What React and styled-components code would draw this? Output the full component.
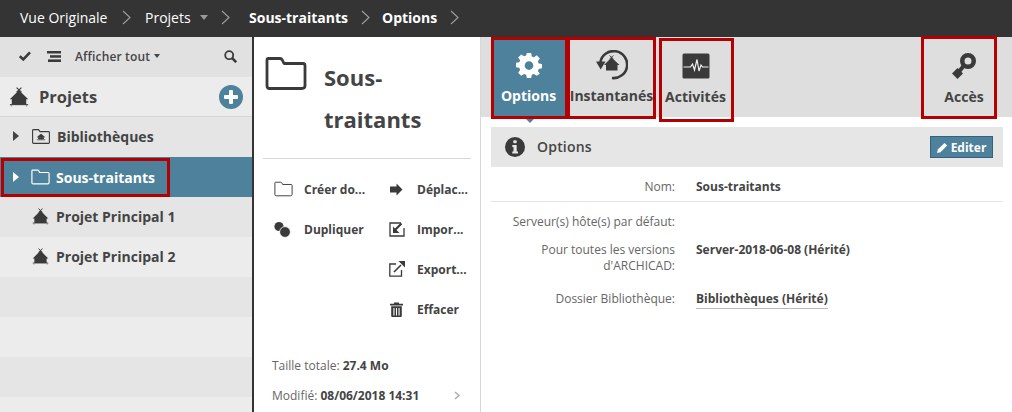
import React from "react";
import styled, { createGlobalStyle } from "styled-components";

const Global = createGlobalStyle`
  html, body { margin: 0; padding: 0; background: #fff; }
  body { font-family: "Open Sans", "Liberation Sans", sans-serif; color: #3c3c3c; }
  * { box-sizing: border-box; }
`;

const Page = styled.div`
  width: 1012px; height: 412px; overflow: hidden;
  display: flex; flex-direction: column; background: #fff;
`;
const TopBar = styled.header`
  height: 37px; flex: none; background: #343434; color: #fff;
  display: flex; align-items: center; padding: 0 0 2px 20px; font-size: 14px;
`;
const Crumb = styled.span`
  font-weight: ${p => (p.$bold ? 700 : 400)}; white-space: nowrap;
  width: ${p => p.$w}px; flex: none;
`;
const Chevron = styled.svg`
  width: 9px; height: 15px; flex: none;
  margin: 0 ${p => p.$r}px 0 ${p => p.$l}px;
`;
const Caret = styled.span`
  flex: none; width: 0; height: 0; margin-left: ${p => p.$l || 0}px;
  border-left: ${p => p.$s || 4.5}px solid transparent; border-right: ${p => p.$s || 4.5}px solid transparent;
  border-top: ${p => (p.$s ? 4 : 5)}px solid ${p => p.$c};
`;
const Body = styled.div`display: flex; flex: 1; min-height: 0;`;

const Sidebar = styled.aside`
  width: 254px; flex: none; border-right: 2px solid #343434; display: flex; flex-direction: column;
`;
const SideTools = styled.div`
  height: 40px; flex: none; background: #e1e1e1; display: flex; align-items: center;
  padding: 0 15px 2px 19px; font-size: 12px; font-weight: 600; color: #444;
`;
const ToolGap = styled.span`width: 16px; flex: none;`;
const ToolSpacer = styled.span`flex: 1;`;
const ToolLabel = styled.span`margin-left: 14px; letter-spacing: 0.15px;`;
const SideHead = styled.div`
  height: 40px; flex: none; background: #ececec; border-bottom: 1px solid #d6d6d6;
  display: flex; align-items: center; padding: 0 9px 0 9px; justify-content: space-between;
`;
const SideTitle = styled.div`
  display: flex; align-items: center; gap: 10px;
  font-size: 16.5px; font-weight: 700; color: #444;
`;
const PlusBtn = styled.span`
  width: 24px; height: 24px; border-radius: 50%; background: #4e819c; position: relative; display: block;
  &::before { content: ""; position: absolute; left: 5px; top: 10px; width: 14px; height: 4px; background: #fff; border-radius: 1px; }
  &::after { content: ""; position: absolute; left: 10px; top: 5px; width: 4px; height: 14px; background: #fff; border-radius: 1px; }
`;
const TreeRow = styled.div`
  height: 40px; flex: none; display: flex; align-items: center;
  background: ${p => (p.$active ? "#4e819c" : p.$alt ? "#ececec" : "#e5e5e5")};
  color: ${p => (p.$active ? "#fff" : "#444")};
  font-size: 14px; font-weight: 700;
  padding-bottom: ${p => (p.$flag ? 0 : 2)}px;
  padding-left: ${p => (p.$flag ? 1 : p.$leaf ? 32 : 13)}px;
`;
const Flagged = styled.div`
  display: flex; align-items: center; width: 169px; height: 39px; align-self: flex-end;
  border: 3px solid #b40000; padding: 0 0 1px 9px;
`;
const Arrow = styled.span`
  flex: none; width: 0; height: 0; margin-right: ${p => p.$r}px;
  border-top: 5px solid transparent; border-bottom: 5px solid transparent;
  border-left: 6px solid currentColor;
`;
const RowIcon = styled.span`display: flex; flex: none; margin-right: ${p => p.$r}px;`;

const Middle = styled.section`
  width: 227px; flex: none; border-right: 1px solid #d8d8d8; padding: 0 9px;
  display: flex; flex-direction: column;
`;
const TitleBlock = styled.div`
  height: 122px; flex: none; border-bottom: 1px solid #d8d8d8;
  display: flex; align-items: flex-start; padding: 19px 0 0 2px;
`;
const TitleText = styled.h1`
  margin: 0 0 0 17px; font-size: 22px; font-weight: 700; color: #444; line-height: 42px; width: 120px;
`;
const Actions = styled.div`
  display: grid; grid-template-columns: 116px 92px; grid-auto-rows: 40px; padding-top: 10px; flex: none;
`;
const Action = styled.div`
  display: flex; align-items: center; font-size: 12px; font-weight: 700; color: #444; padding-left: ${p => (p.$left ? 11 : 10)}px;
  white-space: nowrap;
`;
const ActIcon = styled.span`
  width: ${p => p.$w}px; flex: none; display: flex; align-items: center; padding-left: ${p => p.$p || 0}px;
`;
const Meta = styled.div`
  margin-top: auto; padding: 0 0 2px 9px; font-size: 12px; color: #666;
`;
const MetaLine = styled.div`
  height: 30px; display: flex; align-items: center; white-space: pre;
  b { font-weight: 700; color: #444; }
`;
const MetaChevron = styled.svg`width: 6px; height: 9px; margin-left: 35px; margin-top: 1px;`;

const Main = styled.main`flex: 1; display: flex; flex-direction: column; min-width: 0;`;
const TabBar = styled.nav`
  height: 80px; flex: none; background: #dedede; display: flex; align-items: flex-start; padding-left: 10px;
`;
const Tab = styled.div`
  width: ${p => p.$w}px; height: ${p => p.$h || 82}px; flex: none; border: 3px solid #b40000; position: relative;
  margin-left: ${p => p.$ml || 0}px; margin-top: ${p => p.$mt || 0}px;
  padding-top: ${p => p.$pt || 0}px; padding-left: ${p => p.$pl || 0}px; padding-right: ${p => p.$pr || 0}px;
  display: flex; flex-direction: column; align-items: center;
  font-size: 14px; font-weight: 700; white-space: nowrap;
  background: ${p => (p.$active ? "#4e819c" : "transparent")};
  color: ${p => (p.$active ? "#fff" : "#444")};
`;
const TabIconWrap = styled.span`
  height: 35px; margin-top: 7px; margin-bottom: 4px; display: flex; align-items: center; justify-content: center;
`;
const Pointer = styled.span`
  position: absolute; left: 32px; bottom: -7px; width: 0; height: 0;
  border-left: 4px solid transparent; border-right: 4px solid transparent; border-top: 4px solid #4e819c;
`;
const Panel = styled.div`padding: 10px 9px 0 10px;`;
const PanelHead = styled.div`
  height: 40px; background: #e6e6e6; display: flex; align-items: center; padding: 0 10px 0 14px;
`;
const PanelTitle = styled.span`margin: 0 0 2px 12px; font-size: 14px; font-weight: 600; color: #444; flex: 1; letter-spacing: 0.2px;`;
const EditBtn = styled.span`
  width: 63px; height: 22px; background: #4e819c; border: 1px solid #37607a; color: #fff;
  font-size: 12px; font-weight: 700; display: flex; align-items: center; justify-content: center; gap: 3px;
`;
const FieldRow = styled.div`
  display: grid; grid-template-columns: 184px 1fr; column-gap: 21px; font-size: 12px; line-height: 16px;
  padding: ${p => p.$pad || "0"};
  border-bottom: ${p => (p.$line ? "1px solid #e4e4e4" : "none")};
`;
const FieldLabel = styled.div`text-align: right; color: #666;`;
const FieldValue = styled.div`font-weight: 700; color: #444; font-size: 12px;`;
const Linked = styled.span`border-bottom: 1px solid #bbb; padding-bottom: 1px;`;

const Hut = ({ s = 16 }) => (
  <svg width={s} height={s} viewBox="0 0 18 18" fill="#3a3a3a">
    <path d="M9 3 L17.300 11 H15.500 V16 H2.500 V11 H.7 Z" />
    <path d="M6.800 .6 L11.200 4.600 M11.200 .6 L6.800 4.600" stroke="#3a3a3a" strokeWidth="1" fill="none" />
    <path d="M.8 15.900H17.200" stroke="#3a3a3a" strokeWidth=".9" />
    <path d="M2 17.600v-1.500M16 17.600v-1.500" stroke="#777" strokeWidth=".8" />
  </svg>
);
const Folder = ({ w, h, c = "#3a3a3a", sw = 1.4 }) => (
  <svg width={w} height={h} viewBox="0 0 42 34" fill="none" stroke={c} strokeWidth={sw * 42 / w} strokeLinejoin="round">
    <path d="M3.500 2 H15 Q16.500 2 17.300 3.500 L19 7 H38 Q40 7 40 9 V29 Q40 32 37 32 H4.500 Q2 32 2 29 V3.500 Q2 2 3.500 2 Z" />
  </svg>
);
const Gear = () => (
  <svg width="26" height="26" viewBox="0 0 24 24" fill="#fff">
    <path fillRule="evenodd" d="M10 1h4l.6 3.100 1.900.8L19.200 3.100 22 6l-1.800 2.600.8 1.900L24 11v4l-3 .6-.8 1.900 1.800 2.600L19.200 22l-2.700-1.800-1.900.8L14 24h-4l-.6-3-1.900-.8L4.800 22 2 19.100l1.800-2.600-.8-1.900L0 14v-4l3-.5.8-1.900L2 5 4.800 2.200 7.500 4l1.900-.8Z M12 8.500a4 4 0 1 0 0 8 4 4 0 0 0 0-8Z" />
  </svg>
);
const Snapshot = () => (
  <svg width="32" height="30" viewBox="0 0 32 30" fill="none">
    <path d="M4.400 12 A13.500 13.500 0 1 1 16 28" stroke="#3a3a3a" strokeWidth="2.600" />
    <path d="M0 11.500 H9.500 L4.700 19.500 Z" fill="#3a3a3a" />
    <path d="M15.500 7.500 L23.500 15 H21.500 V20.500 H10 V15 H8 Z" fill="#3a3a3a" />
    <path d="M13.500 5.500 L17.500 9 M17.500 5.500 L13.500 9" stroke="#3a3a3a" strokeWidth=".9" />
  </svg>
);
const Pulse = () => (
  <svg width="28" height="26" viewBox="0 0 28 26">
    <rect x="0.500" y="0.500" width="27" height="25" rx="1.500" fill="#3a3a3a" />
    <path d="M1.500 14 H8.500 L10.500 11 L12.500 17 L15 6.500 L17 18 L19 12 L20.500 14 H26.500" fill="none" stroke="#f0f0f0" strokeWidth="1.200" />
  </svg>
);
const KeyIcon = () => (
  <svg width="24" height="26" viewBox="0 0 24 26" fill="#3a3a3a">
    <path fillRule="evenodd" d="M16 0 a8 8 0 1 1 0 16 a8 8 0 1 1 0-16 Z M16 4.500 a3.500 3.500 0 1 0 0 7 a3.500 3.500 0 0 0 0-7 Z" />
    <path d="M11.500 13 L6 20" stroke="#3a3a3a" strokeWidth="4" fill="none" />
    <path d="M5.500 15 L11 20.500 L5.500 26 L0 20.500 Z" />
  </svg>
);
const Info = () => (
  <svg width="20" height="20" viewBox="0 0 20 20">
    <circle cx="10" cy="10" r="10" fill="#3a3a3a" />
    <rect x="8.300" y="3.300" width="3.400" height="3" rx="1" fill="#e6e6e6" />
    <path d="M7.300 8 H11.700 V14.500 H13 V16.500 H7.300 V14.500 H8.500 V10 H7.300 Z" fill="#e6e6e6" />
  </svg>
);
const Pencil = () => (
  <svg width="11" height="11" viewBox="0 0 11 11" fill="#fff">
    <path d="M0 11 L.8 7.600 L7.500 1 L10.200 3.600 L3.400 10.300 Z" />
  </svg>
);
const Check = () => (
  <svg width="12" height="10" viewBox="0 0 12 10" fill="none" stroke="#3a3a3a" strokeWidth="2.600"><path d="M.8 5.200 L4.300 8.400 L11 1.300" /></svg>
);
const Stack = () => (
  <svg width="14" height="11" viewBox="0 0 14 11" fill="#3a3a3a">
    <rect x="0" y="0" width="14" height="2.500" /><rect x="3" y="4.200" width="11" height="2.500" /><rect x="1" y="8.400" width="13" height="2.600" />
  </svg>
);
const Search = () => (
  <svg width="13" height="13" viewBox="0 0 13 13" fill="none" stroke="#3a3a3a">
    <circle cx="5.200" cy="5.200" r="4" strokeWidth="1.800" /><path d="M8.200 8.200 L12.200 12.200" strokeWidth="2.600" />
  </svg>
);
const LibFolder = () => (
  <svg width="18" height="15" viewBox="0 0 18 15" fill="none" stroke="#3a3a3a" strokeWidth="1.100">
    <path d="M1.500 .6 H6.500 L8 2.600 H16.500 Q17.400 2.600 17.400 3.500 V13.500 Q17.400 14.400 16.500 14.400 H1.500 Q.6 14.400 .6 13.500 V1.500 Q.6 .6 1.500 .6 Z" />
    <path d="M9 5 L12.500 8 H5.500 Z M6.500 8.500 H11.500 V10 H6.500 Z M4.800 10.800 H13.200" fill="#3a3a3a" strokeWidth=".7" />
  </svg>
);
const ArrowRight = () => (
  <svg width="13" height="13" viewBox="0 0 13 13" fill="#3a3a3a"><path d="M0 3.500 H6.500 V.5 L12.500 6.500 L6.500 12.500 V9.500 H0 Z" /></svg>
);
const Dup = () => (
  <svg width="17" height="17" viewBox="0 0 17 17" fill="#3a3a3a"><circle cx="5" cy="5.500" r="4.600" /><circle cx="11" cy="11" r="5.400" stroke="#fff" strokeWidth=".8" /></svg>
);
const ImportIc = () => (
  <svg width="16" height="15" viewBox="0 0 16 15" fill="none" stroke="#3a3a3a">
    <path d="M12 1 H1 V14 H15 V6" strokeWidth="1.300" />
    <path d="M12.500 1.500 L6.500 7.500" strokeWidth="2.200" /><path d="M4 4.500 V11 H10.500 Z" fill="#3a3a3a" stroke="none" />
  </svg>
);
const ExportIc = () => (
  <svg width="16" height="16" viewBox="0 0 16 16" fill="none" stroke="#3a3a3a">
    <path d="M7 3 H.8 V15.200 H12.500 V9" strokeWidth="1.300" />
    <path d="M5 11 L12 4" strokeWidth="1.600" /><path d="M9.500 0 H16 V6.500 Z" fill="#3a3a3a" stroke="none" />
  </svg>
);
const Trash = () => (
  <svg width="13" height="15" viewBox="0 0 13 15" fill="#3a3a3a">
    <path d="M0 1.800 H4 V.4 H9 V1.800 H13 V3.500 H0 Z" />
    <path fillRule="evenodd" d="M1.200 4.300 H11.800 V14 Q11.800 15 10.800 15 H2.200 Q1.200 15 1.200 14 Z M3.400 6 V13.400 H4.500 V6 Z M6 6 V13.400 H7 V6 Z M8.500 6 V13.400 H9.600 V6 Z" />
  </svg>
);
const Chev = ({ l, r }) => (
  <Chevron $l={l} $r={r} viewBox="0 0 9 15" fill="none" stroke="#9a9a9a" strokeWidth="1.200"><path d="M1 1 L8 7.500 L1 14" /></Chevron>
);

export default function App() {
  return (
    <Page>
      <Global />
      <TopBar>
        <Crumb $w={94}>Vue Originale</Crumb>
        <Chev l={8} r={14} />
        <Crumb $w={55}>Projets</Crumb>
        <Caret $c="#9a9a9a" />
        <Chev l={13} r={19} />
        <Crumb $bold $w={104}>Sous-traitants</Crumb>
        <Chev l={8} r={12} />
        <Crumb $bold $w={55}>Options</Crumb>
        <Chev l={13} r={0} />
      </TopBar>
      <Body>
        <Sidebar>
          <SideTools>
            <Check />
            <ToolGap />
            <Stack />
            <ToolLabel>Afficher tout</ToolLabel>
            <Caret $c="#444" $l={4} $s={3.5} />
            <ToolSpacer />
            <Search />
          </SideTools>
          <SideHead>
            <SideTitle><Hut s={20} />Projets</SideTitle>
            <PlusBtn />
          </SideHead>
          <TreeRow>
            <Arrow $r={13} /><RowIcon $r={7}><LibFolder /></RowIcon>Bibliothèques
          </TreeRow>
          <TreeRow $active $flag>
            <Flagged>
              <Arrow $r={12} /><RowIcon $r={6}><Folder w={19} h={16} c="#fff" sw={1.200} /></RowIcon>Sous-traitants
            </Flagged>
          </TreeRow>
          <TreeRow $leaf><RowIcon $r={7}><Hut s={17} /></RowIcon>Projet Principal 1</TreeRow>
          <TreeRow $leaf $alt><RowIcon $r={7}><Hut s={17} /></RowIcon>Projet Principal 2</TreeRow>
          <TreeRow />
          <TreeRow $alt />
          <TreeRow />
          <TreeRow $alt />
        </Sidebar>
        <Middle>
          <TitleBlock>
            <Folder w={42} h={35} sw={2.800} />
            <TitleText>Sous-traitants</TitleText>
          </TitleBlock>
          <Actions>
            <Action $left><ActIcon $w={30}><Folder w={19} h={16} c="#444" sw={1} /></ActIcon>Créer do...</Action>
            <Action><ActIcon $w={28} $p={1}><ArrowRight /></ActIcon>Déplac...</Action>
            <Action $left><ActIcon $w={30}><Dup /></ActIcon>Dupliquer</Action>
            <Action><ActIcon $w={28}><ImportIc /></ActIcon>Impor...</Action>
            <span />
            <Action><ActIcon $w={28}><ExportIc /></ActIcon>Export...</Action>
            <span />
            <Action><ActIcon $w={28} $p={1}><Trash /></ActIcon>Effacer</Action>
          </Actions>
          <Meta>
            <MetaLine>Taille totale: <b>27.4 Mo</b></MetaLine>
            <MetaLine>
              Modifié: <b>08/06/2018 14:31</b>
              <MetaChevron viewBox="0 0 6 9" fill="none" stroke="#aaa" strokeWidth="1.500"><path d="M1 1 L5 4.500 L1 8" /></MetaChevron>
            </MetaLine>
          </Meta>
        </Middle>
        <Main>
          <TabBar>
            <Tab $active $w={77} $pr={2}><TabIconWrap><Gear /></TabIconWrap>Options<Pointer /></Tab>
            <Tab $w={89} $ml={-1}><TabIconWrap><Snapshot /></TabIconWrap>Instantanés</Tab>
            <Tab $w={75} $ml={3} $mt={1} $h={84} $pr={2}><TabIconWrap><Pulse /></TabIconWrap>Activités</Tab>
            <Tab $w={76} $ml={187} $mt={-1} $h={83} $pt={2} $pl={10}><TabIconWrap><KeyIcon /></TabIconWrap>Accès</Tab>
          </TabBar>
          <Panel>
            <PanelHead>
              <Info />
              <PanelTitle>Options</PanelTitle>
              <EditBtn><Pencil />Editer</EditBtn>
            </PanelHead>
            <FieldRow $line $pad="12px 0 6px">
              <FieldLabel>Nom:</FieldLabel>
              <FieldValue>Sous-traitants</FieldValue>
            </FieldRow>
            <FieldRow $pad="12px 0 12px">
              <FieldLabel>Serveur(s) hôte(s) par défaut:</FieldLabel>
              <FieldValue />
            </FieldRow>
            <FieldRow $pad="0 0 17px">
              <FieldLabel>Pour toutes les versions<br />d'ARCHICAD:</FieldLabel>
              <FieldValue>Server-2018-06-08 (Hérité)</FieldValue>
            </FieldRow>
            <FieldRow>
              <FieldLabel>Dossier Bibliothèque:</FieldLabel>
              <FieldValue><Linked>Bibliothèques (Hérité)</Linked></FieldValue>
            </FieldRow>
          </Panel>
        </Main>
      </Body>
    </Page>
  );
}
